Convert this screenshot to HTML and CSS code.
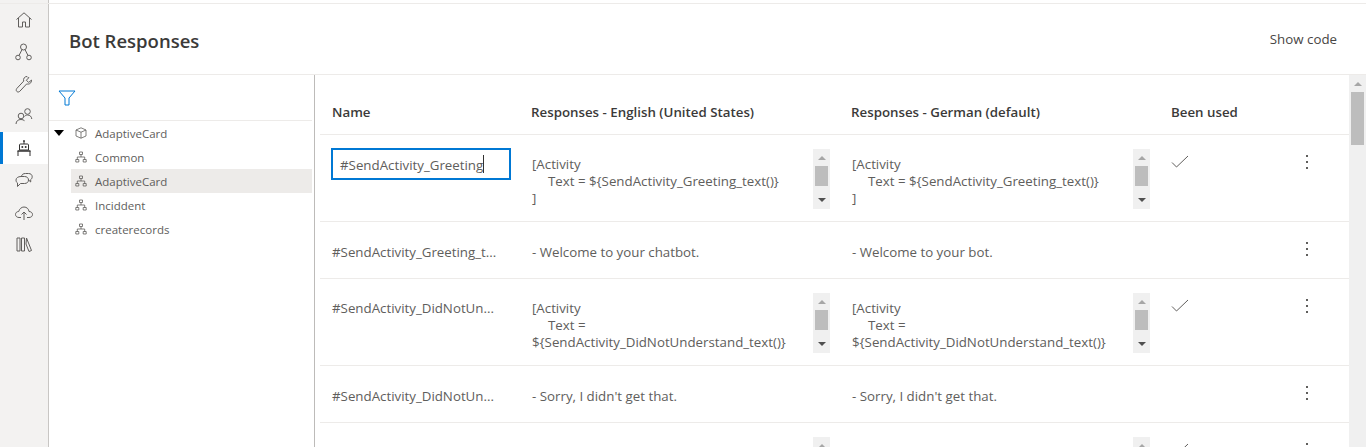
FILE: index.html
```html
<!DOCTYPE html>
<html lang="en">
<head>
<meta charset="utf-8">
<title>Bot Responses</title>
<link rel="stylesheet" href="styles.css">
</head>
<body>
<div class="app">
  <nav class="rail">
    <a class="rail-item"><svg width="20" height="20" viewBox="0 0 20 20"><path d="M2.500 9.500 10 2.800l7.500 6.700M4.500 8v9h4v-5h3v5h4V8"/></svg></a>
    <a class="rail-item"><svg width="20" height="20" viewBox="0 0 20 20"><circle cx="9.500" cy="5" r="3"/><circle cx="4" cy="15.500" r="2.300"/><circle cx="15" cy="15.500" r="2.300"/><path d="M8 7.600 5 13.500M11 7.600l3 5.900"/></svg></a>
    <a class="rail-item"><svg width="20" height="20" viewBox="0 0 20 20"><path d="M13 2.500c-2.500 0-4 2.300-3.300 4.600L2.800 14.500c-1.800 2.400 1 4.600 2.900 2.900l7-7.500c2.500.8 5-.9 4.800-3.800l-2.800 2.300-2.400-2.100 2.500-2.600c-.2-.1-.5-.2-.8-.2z"/></svg></a>
    <a class="rail-item"><svg width="20" height="20" viewBox="0 0 20 20"><circle cx="7" cy="10" r="2.800"/><path d="M2 18c.2-3 2-4.500 5-4.500 1.500 0 2.700.4 3.500 1.200"/><circle cx="13.500" cy="5.500" r="2.800"/><path d="M10.500 10.500c.8-1 1.800-1.500 3-1.500 2.500 0 4 1.500 4.300 4"/></svg></a>
    <a class="rail-item is-active"><svg class="bot" width="20" height="20" viewBox="0 0 20 20"><path d="M10 3v3M6.500 6h7c.6 0 1 .4 1 1v5h-9V7c0-.6.4-1 1-1zM4 18v-5M16 18v-5"/><path class="bar" d="M3.500 13h13"/><circle class="eye" cx="8.300" cy="9" r="1"/><circle class="eye" cx="11.700" cy="9" r="1"/><circle class="eye" cx="10" cy="3" r=".9"/></svg></a>
    <a class="rail-item"><svg width="20" height="20" viewBox="0 0 20 20"><path d="M7 6.500h3.500c2.500 0 4 1.500 4 3.500s-1.500 3.500-4 3.500h-4l-3 3V13c-1-.6-1.500-1.700-1.500-3 0-2 2-3.500 5-3.500z"/><path d="M7.500 6.500c.2-2 1.700-3 4-3h3c2.300 0 3.700 1.300 3.700 3.300 0 1.200-.6 2.200-1.500 2.800v2.400l-2.200-2.100"/></svg></a>
    <a class="rail-item"><svg width="20" height="20" viewBox="0 0 20 20"><path d="M7 15.500H5c-2 0-3.500-1.300-3.500-3 0-1.700 1.300-3 3.200-3C5.300 7 7.500 5 10 5c2.800 0 4.800 2 5 4.500 1.800 0 3.500 1.200 3.500 3s-1.500 3-3.500 3h-2M10 18v-8M7.500 12.500 10 10l2.500 2.500"/></svg></a>
    <a class="rail-item"><svg width="20" height="20" viewBox="0 0 20 20"><path d="M3 4h3v13H3zM7.500 4h3v13h-3zM12.500 4l5 12.500-2.500 1-3-7.500z"/></svg></a>
  </nav>
  <main class="main">
    <header class="page-head">
      <h1 class="page-title">Bot Responses</h1>
      <span class="show-code">Show code</span>
    </header>
    <div class="content">
      <aside class="tree-panel">
        <div class="filter-row">
          <svg class="filter-icon" width="18" height="18" viewBox="0 0 18 18"><path d="M1 2h16l-6 7v7H7V9z"/></svg>
        </div>
        <ul class="tree">
          <li class="tree-row is-root"><span class="caret"></span><svg class="node-icon" width="12" height="12" viewBox="0 0 12 12"><path d="M6 .8 11 3v6l-5 2.200L1 9V3zM1 3l5 2.200L11 3M6 5.200v6"/></svg>AdaptiveCard</li>
          <li class="tree-row"><svg class="node-icon" width="12" height="12" viewBox="0 0 12 12"><path d="M4.500 1h3v2.500h-3zM.8 8.500h3V11h-3zM8.200 8.500h3V11h-3zM6 3.500V6M2.300 8.500V6h7.400v2.500"/></svg>Common</li>
          <li class="tree-row is-selected"><svg class="node-icon" width="12" height="12" viewBox="0 0 12 12"><path d="M4.500 1h3v2.500h-3zM.8 8.500h3V11h-3zM8.200 8.500h3V11h-3zM6 3.500V6M2.300 8.500V6h7.400v2.500"/></svg>AdaptiveCard</li>
          <li class="tree-row"><svg class="node-icon" width="12" height="12" viewBox="0 0 12 12"><path d="M4.500 1h3v2.500h-3zM.8 8.500h3V11h-3zM8.200 8.500h3V11h-3zM6 3.500V6M2.300 8.500V6h7.400v2.500"/></svg>Inciddent</li>
          <li class="tree-row"><svg class="node-icon" width="12" height="12" viewBox="0 0 12 12"><path d="M4.500 1h3v2.500h-3zM.8 8.500h3V11h-3zM8.200 8.500h3V11h-3zM6 3.500V6M2.300 8.500V6h7.400v2.500"/></svg>createrecords</li>
        </ul>
      </aside>
      <section class="table-wrap">
        <div class="table">
          <div class="row head">
            <div class="cell first">Name</div>
            <div class="cell">Responses - English (United States)</div>
            <div class="cell">Responses - German (default)</div>
            <div class="cell">Been used</div>
            <div class="cell"></div>
          </div>

          <div class="row tall">
            <div class="cell name"><div class="name-input">#SendActivity_Greeting<span class="text-caret"></span></div></div>
            <div class="cell editor"><pre class="code">[Activity
<span class="ind">Text = ${SendActivity_Greeting_text()}</span>
]</pre><div class="mini-bar"><span class="arr up"></span><span class="thumb"></span><span class="arr down"></span></div></div>
            <div class="cell editor"><pre class="code">[Activity
<span class="ind">Text = ${SendActivity_Greeting_text()}</span>
]</pre><div class="mini-bar"><span class="arr up"></span><span class="thumb"></span><span class="arr down"></span></div></div>
            <div class="cell used"><svg class="check" width="18" height="14" viewBox="0 0 18 14"><path d="M1 7.500 5.500 12 17 1"/></svg></div>
            <div class="cell more"><span class="dots"><i></i><i></i><i></i></span></div>
          </div>

          <div class="row short">
            <div class="cell name plain">#SendActivity_Greeting_t...</div>
            <div class="cell line">- Welcome to your chatbot.</div>
            <div class="cell line">- Welcome to your bot.</div>
            <div class="cell used"></div>
            <div class="cell more"><span class="dots"><i></i><i></i><i></i></span></div>
          </div>

          <div class="row tall">
            <div class="cell name plain top">#SendActivity_DidNotUn...</div>
            <div class="cell editor"><pre class="code">[Activity
<span class="ind">Text =</span>
${SendActivity_DidNotUnderstand_text()}</pre><div class="mini-bar"><span class="arr up"></span><span class="thumb"></span><span class="arr down"></span></div></div>
            <div class="cell editor"><pre class="code">[Activity
<span class="ind">Text =</span>
${SendActivity_DidNotUnderstand_text()}</pre><div class="mini-bar"><span class="arr up"></span><span class="thumb"></span><span class="arr down"></span></div></div>
            <div class="cell used"><svg class="check" width="18" height="14" viewBox="0 0 18 14"><path d="M1 7.500 5.500 12 17 1"/></svg></div>
            <div class="cell more"><span class="dots"><i></i><i></i><i></i></span></div>
          </div>

          <div class="row short">
            <div class="cell name plain">#SendActivity_DidNotUn...</div>
            <div class="cell line">- Sorry, I didn't get that.</div>
            <div class="cell line">- Sorry, I didn't get that.</div>
            <div class="cell used"></div>
            <div class="cell more"><span class="dots"><i></i><i></i><i></i></span></div>
          </div>

          <div class="row tall">
            <div class="cell name"></div>
            <div class="cell editor"><div class="code"></div><div class="mini-bar"><span class="arr up"></span><span class="thumb"></span><span class="arr down"></span></div></div>
            <div class="cell editor"><div class="code"></div><div class="mini-bar"><span class="arr up"></span><span class="thumb"></span><span class="arr down"></span></div></div>
            <div class="cell used"><svg class="check" width="18" height="14" viewBox="0 0 18 14"><path d="M1 7.500 5.500 12 17 1"/></svg></div>
            <div class="cell more"><span class="dots"><i></i><i></i><i></i></span></div>
          </div>
        </div>
        <div class="page-bar"><span class="arr up"></span><span class="page-thumb"></span></div>
      </section>
    </div>
  </main>
</div>
</body>
</html>
```
FILE: styles.css
```css
* { box-sizing: border-box; }
html, body { margin: 0; height: 447px; overflow: hidden; background: #fff; }
body { font-family: "Open Sans", "Noto Sans", "Liberation Sans", sans-serif; font-size: 13px; color: #323130; }

.app { display: flex; height: 447px; padding-top: 4px; position: relative; overflow: hidden; }
.app::before { content: ""; position: absolute; left: 0; right: 0; top: 3px; height: 1px; background: #edebe9; }

.rail { width: 49px; flex: none; background: #f3f2f1; border-right: 1px solid #c8c6c4; margin-top: -4px; padding-top: 4px; }
.rail-item { display: flex; height: 32px; align-items: center; justify-content: center; }
.rail-item svg { fill: none; stroke: #605e5c; stroke-width: 1; }
.rail-item.is-active { background: #fff; border-left: 3px solid #0078d4; padding-right: 3px; }
.rail-item.is-active svg { stroke: #323130; }
.rail-item .bar { stroke-width: 1.500; }
.rail-item .eye { fill: #323130; stroke: none; }

.main { flex: 1; min-width: 0; display: flex; flex-direction: column; }
.page-head { height: 71px; flex: none; display: flex; align-items: center; justify-content: space-between; padding: 0 29px 0 20px; border-bottom: 1px solid #edebe9; }
.page-title { margin: 2px 0 0; font-size: 18.500px; font-weight: 600; color: #3b3a39; }
.show-code { font-size: 13.300px; color: #484644; margin-top: -1px; }

.content { flex: 1; min-height: 0; display: flex; }
.tree-panel { width: 266px; flex: none; border-right: 1px solid #bdbbb9; padding-right: 2px; }
.filter-row { height: 46px; display: flex; align-items: center; padding-left: 9px; border-bottom: 1px solid #edebe9; }
.filter-icon { fill: none; stroke: #0078d4; stroke-width: 1; margin-top: 1px; }
.tree { list-style: none; margin: 0; padding: 0; }
.tree-row { height: 24px; display: flex; align-items: center; gap: 5px; padding-left: 26px; margin-left: 22px; color: #605e5c; font-size: 11.500px; white-space: nowrap; position: relative; }
.tree-row.is-selected { background: #edebe9; }
.caret { position: absolute; left: -17px; top: 9px; width: 0; height: 0; border-left: 5px solid transparent; border-right: 5px solid transparent; border-top: 6px solid #000; }
.node-icon { fill: none; stroke: #605e5c; stroke-width: .8; flex: none; margin-left: -22px; margin-right: 3px; }

.table-wrap { flex: 1; min-width: 0; display: flex; padding-left: 5px; }
.table { flex: 1; min-width: 0; }
.page-bar { width: 17px; flex: none; background: #f0f0f0; display: flex; flex-direction: column; align-items: center; padding-top: 7px; }
.page-thumb { width: 13px; height: 53px; background: #bdbdbd; margin-top: 6px; }

.row { display: grid; grid-template-columns: 200px 320px 320px 120px 1fr; border-bottom: 1px solid #edebe9; }
.row.head { height: 60px; align-items: end; }
.row.head .cell { font-weight: 600; color: #3b3a39; padding: 0 0 13px 11px; white-space: nowrap; }
.row.head .cell.first { padding-left: 12px; }
.row.tall { height: 87px; }
.row.short { height: 57px; align-items: center; }

.cell { color: #605e5c; font-size: 13.300px; }
.cell.name { padding: 13px 0 0 11px; }
.cell.plain { padding: 4px 0 0 12px; white-space: nowrap; font-size: 13.300px; }
.cell.plain.top { padding-top: 20px; }
.name-input { width: 180px; height: 32px; border: 2px solid #0078d4; padding: 1px 0 0 7px; display: flex; align-items: center; color: #605e5c; }
.text-caret { width: 1px; height: 18px; background: #323130; margin-top: -1px; }

.cell.editor { display: flex; justify-content: space-between; padding: 14px 10px 0 12px; }
.code { margin: 0; font: inherit; line-height: 17px; padding-top: 7px; white-space: pre; }
.ind { margin-left: 16px; }
.cell.line { padding: 4px 0 0 12px; }

.mini-bar { width: 17px; height: 60px; flex: none; background: #f0f0f0; display: flex; flex-direction: column; align-items: center; padding-top: 7px; }
.thumb { width: 13px; height: 20px; background: #bdbdbd; margin-top: 6px; }
.arr { width: 0; height: 0; border-left: 4px solid transparent; border-right: 4px solid transparent; display: block; flex: none; }
.arr.up { border-bottom: 4px solid #a6a6a6; }
.arr.down { border-top: 4px solid #505050; margin-top: 12px; }

.cell.used { padding: 20px 0 0 11px; }
.row.short .cell.used, .row.short .cell.more { align-self: start; }
.check { fill: none; stroke: #605e5c; stroke-width: 1; display: block; }
.cell.more { padding: 20px 0 0 26px; }
.dots { display: flex; flex-direction: column; gap: 4px; width: 2px; }
.dots i { display: block; width: 2px; height: 2px; background: #605e5c; }
```
